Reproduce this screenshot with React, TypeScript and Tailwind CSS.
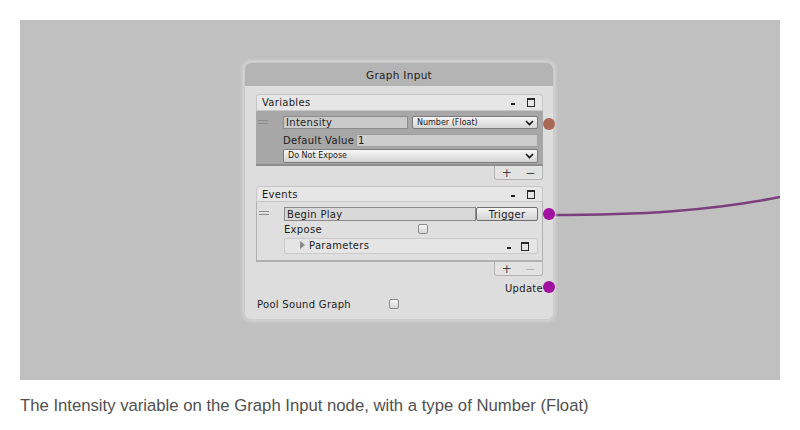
import React from 'react';

const Chevron: React.FC = () => (
  <svg width="9" height="6" viewBox="0 0 9 6" className="shrink-0">
    <path d="M1 1 L4.5 4.5 L8 1" stroke="#111" strokeWidth="1.6" fill="none" />
  </svg>
);

const Dropdown: React.FC<{ label: string; className?: string }> = ({ label, className }) => (
  <div
    className={`flex items-center justify-between rounded-[2px] border border-[#7c7c7c] bg-gradient-to-b from-[#f6f6f6] to-[#d4d4d4] pl-[4px] pr-[3px] text-[8px] leading-none tracking-normal text-[#1a1a1a] ${className ?? ''}`}
  >
    <span>{label}</span>
    <Chevron />
  </div>
);

const Checkbox: React.FC = () => (
  <div className="h-[10px] w-[10px] shrink-0 rounded-[2px] border border-[#8a8a8a] bg-gradient-to-b from-[#f4f4f4] to-[#d6d6d6]" />
);

const DashWindow: React.FC<{ gap?: string }> = ({ gap = 'gap-[12px]' }) => (
  <div className={`flex items-center ${gap}`}>
    <div className="mt-[3px] h-[2px] w-[4px] bg-[#222]" />
    <div className="h-[9px] w-[8px] border border-t-2 border-[#2a2a2a]" />
  </div>
);

const Handle: React.FC = () => (
  <div className="flex w-[27px] shrink-0 flex-col gap-[2px] pl-[2px] pt-[9px]">
    <div className="h-px w-[10px] bg-[#8a8a8a]" />
    <div className="h-px w-[10px] bg-[#8a8a8a]" />
  </div>
);

const PlusMinus: React.FC<{ minusFaded?: boolean }> = ({ minusFaded }) => (
  <div className="flex justify-end">
    <div className="flex h-[14px] w-[49px] items-center justify-around rounded-b-[3px] border border-t-0 border-[#b4b4b4] bg-[#e2e2e2] text-[12px] leading-none tracking-normal text-[#444]">
      <span>+</span>
      <span className={minusFaded ? 'text-[#b0b0b0]' : ''}>−</span>
    </div>
  </div>
);

const SectionHeader: React.FC<{ title: string; h: string }> = ({ title, h }) => (
  <div
    className={`flex ${h} items-center justify-between rounded-t-[3px] border border-[#c6c6c6] bg-[#e6e6e6] pl-[5px] pr-[7px]`}
  >
    <span>{title}</span>
    <DashWindow />
  </div>
);

const Pin: React.FC<{ top: string; color: string }> = ({ top, color }) => (
  <div className={`absolute left-[298px] ${top} h-[12px] w-[12px] rounded-full ${color}`} />
);

const GraphInputNode: React.FC = () => (
  <div
    className="absolute left-[225px] top-[43px] flex h-[256px] w-[308px] flex-col rounded-[6px] bg-[#dddddd] text-[10px] tracking-[0.3px] text-[#1c1c1c] shadow-[0_0_0_1px_#cbcbcb,0_0_3px_3px_#d2d2d2]"
    style={{ fontFamily: '"DejaVu Sans", Verdana, sans-serif' }}
  >
    {/* Title */}
    <div className="flex h-[23px] items-center justify-center rounded-t-[6px] bg-[#b4b4b4] pt-[3px] text-[10.5px]">
      Graph Input
    </div>

    <div className="flex flex-col pl-[11px] pr-[10px] pt-[8px]">
      {/* Variables */}
      <SectionHeader title="Variables" h="h-[17px]" />
      <div className="flex h-[55px] border-b-2 border-[#8e8e8e] bg-[#a7a7a7]">
        <Handle />
        <div className="flex flex-1 flex-col pr-[5px] pt-[5px]">
          <div className="flex h-[13px] gap-[4px]">
            <div className="flex flex-1 items-center border border-[#8d8d8d] bg-[#cacaca] pl-[2px]">Intensity</div>
            <Dropdown label="Number (Float)" className="w-[126px]" />
          </div>
          <div className="mt-[5px] flex h-[13px] gap-[2px]">
            <span className="flex items-center">Default Value</span>
            <div className="flex flex-1 items-center border border-[#a0a0a0] bg-[#cccccc] pl-[1px]">1</div>
          </div>
          <Dropdown label="Do Not Expose" className="mt-[2px] h-[14px]" />
        </div>
      </div>
      <PlusMinus />

      {/* Events */}
      <div className="mt-[6px]">
        <SectionHeader title="Events" h="h-[16px]" />
        <div className="flex h-[60px] border-x border-b-2 border-[#b0b0b0] bg-[#dfdfdf]">
          <Handle />
          <div className="flex flex-1 flex-col pr-[4px] pt-[5px]">
            <div className="flex h-[14px]">
              <div className="flex flex-1 items-center border border-[#8a8a8a] bg-[#d8d8d8] pl-[2px]">Begin Play</div>
              <div className="flex w-[62px] items-center justify-center rounded-[2px] border border-[#6f6f6f] bg-gradient-to-b from-[#f4f4f4] to-[#d4d4d4]">
                Trigger
              </div>
            </div>
            <div className="mt-[2px] flex h-[12px] items-center">
              <span className="w-[134px] pt-[1px]">Expose</span>
              <Checkbox />
            </div>
            <div className="mt-[3px] flex h-[16px] items-center justify-between rounded-[2px] border border-[#cacaca] bg-[#e5e5e5] pl-[15px] pr-[8px]">
              <div className="-mt-[2px] flex items-center gap-[4px]">
                <svg width="5" height="8" viewBox="0 0 5 8">
                  <path d="M0 0 L5 4 L0 8 Z" fill="#8a8a8a" />
                </svg>
                <span>Parameters</span>
              </div>
              <DashWindow gap="gap-[10px]" />
            </div>
          </div>
        </div>
        <PlusMinus minusFaded />
      </div>

      {/* Update */}
      <div className="mt-[6px] flex h-[12px] items-center justify-end">Update</div>

      {/* Pool Sound Graph */}
      <div className="mt-[4px] flex h-[12px] items-center">
        <span className="w-[133px] pl-[1px]">Pool Sound Graph</span>
        <Checkbox />
      </div>
    </div>

    <Pin top="top-[55px]" color="bg-[#a96856]" />
    <Pin top="top-[145px]" color="bg-[#a1109f]" />
    <Pin top="top-[218px]" color="bg-[#a1109f]" />
  </div>
);

export default function App() {
  return (
    <div className="h-[430px] w-[800px] bg-white pt-[20px]">
      <div className="relative mx-[20px] h-[360px] w-[760px] overflow-hidden bg-[#c0c0c0]">
        <svg className="absolute left-0 top-0" width="760" height="360">
          <path d="M530 195 C 620 195, 690 191, 760 177" stroke="#7c3f7d" strokeWidth="2.5" fill="none" />
        </svg>
        <GraphInputNode />
      </div>
      <p
        className="ml-[20px] mt-[16px] text-[16.7px] leading-[20px] text-[#505050]"
        style={{ fontFamily: '"Liberation Sans", Arial, sans-serif' }}
      >
        The Intensity variable on the Graph Input node, with a type of Number (Float)
      </p>
    </div>
  );
}
